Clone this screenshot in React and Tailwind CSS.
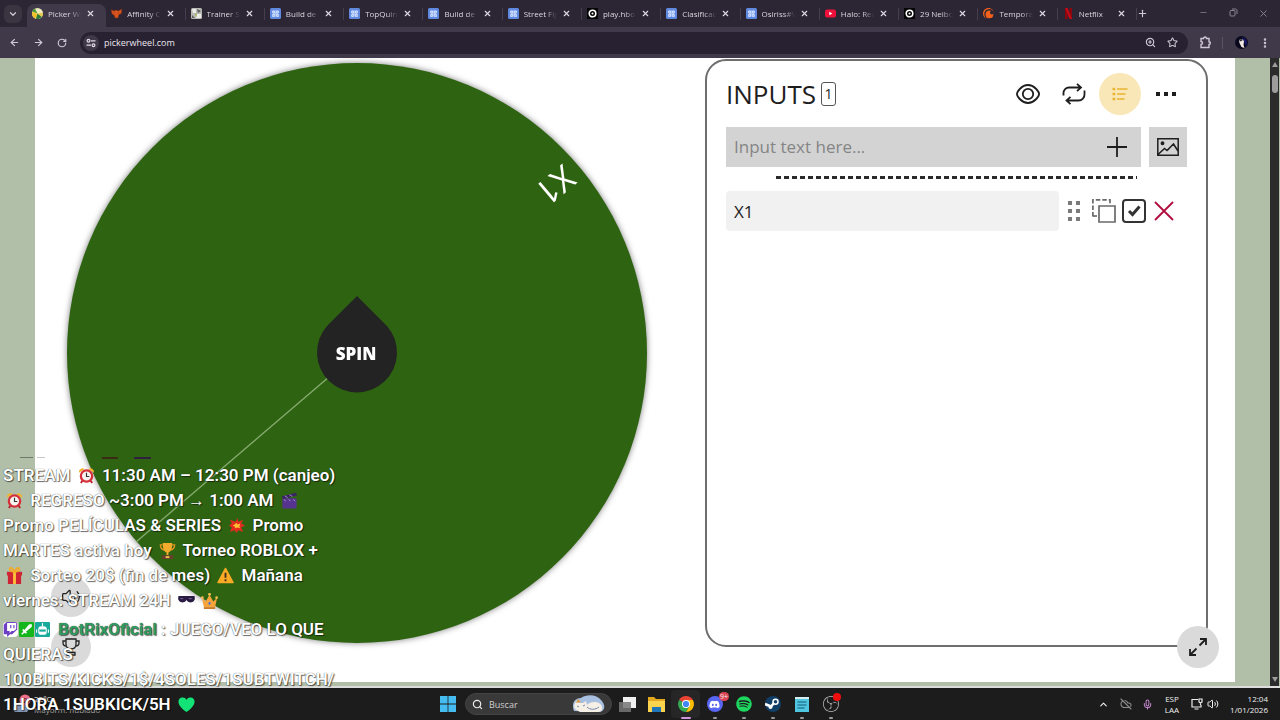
import React, { useState } from 'react';
import { ArrowLeft, ArrowRight, ChevronDown, ChevronUp, CloudOff, Mic, Minus, Plus, RotateCw, Search, Star, Volume2, X, ZoomIn, MoreVertical } from 'lucide-react';
import { FaDiscord, FaSpotify, FaSteamSymbol, FaTwitch } from 'react-icons/fa';
import { SiCrunchyroll, SiObsstudio } from 'react-icons/si';

const tabs = [
  { title: 'Picker Wh', icon: 'picker' },
  { title: 'Affinity Ch', icon: 'affinity' },
  { title: 'Trainer Se', icon: 'trainer' },
  { title: 'Build de', icon: 'blue' },
  { title: 'TopQuint', icon: 'blue' },
  { title: 'Build de', icon: 'blue' },
  { title: 'Street Fig', icon: 'blue' },
  { title: 'play.hbo', icon: 'hbo' },
  { title: 'Clasificac', icon: 'blue' },
  { title: 'Osiriss#W', icon: 'blue' },
  { title: 'Halo: Rea', icon: 'youtube' },
  { title: '29 Neibo', icon: 'hbo' },
  { title: 'Tempora', icon: 'crunchy' },
  { title: 'Netflix', icon: 'netflix' },
];

function Favicon({ name }) {
  if (name === 'crunchy') return <SiCrunchyroll size={11} color="#f4611c" className="shrink-0" />;
  return (
    <svg viewBox="0 0 11 11" className="size-[11px] shrink-0" aria-hidden="true">
      {name === 'picker' && (
        <>
          <circle cx="5.5" cy="5.5" r="5.5" fill="#efe9bd" />
          <path d="M5.500 5.500 3 .6A5.500 5.500 0 0 0 .3 3.700z" fill="#4e9c3c" />
          <path d="M5.500 5.500.3 3.700A5.500 5.500 0 0 0 4 10.800z" fill="#f0c32b" />
          <path d="M5.500 5.500 4 10.800a5.500 5.500 0 0 0 5.800-2z" fill="#2c7a32" />
          <path d="M5.500 5.500 9.800 8.800A5.500 5.500 0 0 0 11 5z" fill="#e7c94a" />
        </>
      )}
      {name === 'affinity' && (
        <path d="M0 1.500 3 3l2-1 2 1 4-2-.6 4.600L8 6.500 7 10H4.200L3 7 1 6zM3 4.300l1 1.200M8 4.300 7 5.500" fill="#d9541e" stroke="#7a2c12" strokeWidth=".5" />
      )}
      {name === 'trainer' && (
        <>
          <rect width="11" height="11" rx="1.500" fill="#b9b9b5" />
          <path d="M1 1h4v4H2zM6 6h4v4H5z" fill="#ecebe6" />
          <path d="M6 1l4 2-3 2zM1 7l3 3H1z" fill="#5c6260" />
          <path d="M4 5l2 1-1 3z" fill="#a8b84c" />
        </>
      )}
      {name === 'blue' && (
        <>
          <rect width="11" height="11" rx="1.500" fill="#6089e0" />
          <path d="M3 2.500h5v6H3z" fill="#9cb9f3" />
          <path d="M2.500 3h2v2h-2zM6.500 3h2v2h-2zM2.500 6.500h2v2h-2zM6.500 6.500h2v2h-2z" fill="none" stroke="#d9e5ff" strokeWidth=".8" />
        </>
      )}
      {name === 'hbo' && (
        <>
          <rect width="11" height="11" fill="#050505" />
          <circle cx="5.500" cy="5.500" r="3.300" fill="none" stroke="#fff" strokeWidth="1.600" />
          <circle cx="5.500" cy="5.500" r="1" fill="#fff" />
        </>
      )}
      {name === 'youtube' && (
        <>
          <rect y="1.500" width="11" height="8" rx="2" fill="#f0103c" />
          <path d="M4.300 3.800v3.400l3-1.700z" fill="#fff" />
        </>
      )}
      {name === 'netflix' && (
        <>
          <path d="M2 0h2.500v11H2zM6.500 0H9v11H6.500z" fill="#8a0710" />
          <path d="M2 0h2.500L9 11H6.500z" fill="#c50a18" />
        </>
      )}
    </svg>
  );
}

function Tab({ tab, active }) {
  return (
    <div className={"relative flex h-[23px] min-w-0 flex-1 items-center gap-[5px] px-[5px] pb-1 " + (active ? 'rounded-t-lg bg-[#40394a]' : '')}>
      <Favicon name={tab.icon} />
      <span className="min-w-0 flex-1 overflow-hidden text-[8px] font-medium whitespace-nowrap text-[#dcd6e0] [mask-image:linear-gradient(90deg,#000_65%,transparent)]">
        {tab.title}
      </span>
      <button type="button" aria-label={'Close ' + tab.title} className="mr-[6px] text-[#e0dbe4]">
        <X size={9} strokeWidth={3} />
      </button>
      {!active && <span className="absolute right-0 h-3 w-px bg-[#453e4e]" />}
    </div>
  );
}

function Browser() {
  return (
    <header className="bg-[#2c2634] text-[#cfc8d6]">
      <div className="flex h-[27px] items-end">
        <div className="flex h-[23px] w-[27px] items-center pb-1 pl-1">
          <button type="button" aria-label="Search tabs" className="flex size-[18px] items-center justify-center rounded-md bg-[#3a3540]">
            <ChevronDown size={10} strokeWidth={3} />
          </button>
        </div>
        <nav className="flex min-w-0 flex-1">
          {tabs.map((tab, i) => <Tab key={i} tab={tab} active={i === 0} />)}
        </nav>
        <div className="flex h-[27px] w-[143px] items-center pr-[2px]">
          <button type="button" aria-label="New tab"><Plus size={11} strokeWidth={2.500} /></button>
          <div className="ml-auto flex text-[#8a8490]">
            <button type="button" aria-label="Minimize" className="flex w-[30px] justify-center"><Minus size={9} /></button>
            <button type="button" aria-label="Restore" className="flex w-[30px] justify-center">
              <svg viewBox="0 0 9 9" className="size-[9px]" fill="none" stroke="currentColor"><rect x="1" y="2.500" width="5" height="5.500" rx="1" /><path d="M3 1h3.500A1.500 1.500 0 0 1 8 2.500V6" /></svg>
            </button>
            <button type="button" aria-label="Close window" className="flex w-[30px] justify-center"><X size={11} /></button>
          </div>
        </div>
      </div>
      <div className="flex h-[31px] items-center bg-[#40394a] pr-[9px]">
        <div className="flex w-[80px] items-center gap-[13px] pl-[9px]">
          <button type="button" aria-label="Back"><ArrowLeft size={11} strokeWidth={2.500} /></button>
          <button type="button" aria-label="Forward"><ArrowRight size={11} strokeWidth={2.500} /></button>
          <button type="button" aria-label="Reload"><RotateCw size={10} strokeWidth={2.800} /></button>
        </div>
        <div className="flex h-[22px] flex-1 items-center rounded-full bg-[#282131] pr-[10px] pl-[3px]">
          <button type="button" aria-label="Site information" className="flex size-4 items-center justify-center rounded-full bg-[#40394a]">
            <svg viewBox="0 0 10 10" className="size-[10px]" fill="none" stroke="#e2dce6" strokeWidth="1.200"><circle cx="2.500" cy="2.800" r="1.400" /><path d="M5 2.800h4.500M.5 7.200H5" /><circle cx="7.500" cy="7.200" r="1.400" /></svg>
          </button>
          <input aria-label="Address" defaultValue="pickerwheel.com" className="ml-[5px] min-w-0 flex-1 bg-transparent text-[9px] font-medium text-[#eae6ee] outline-none" />
          <div className="flex gap-[11px]">
            <button type="button" aria-label="Zoom"><ZoomIn size={11} strokeWidth={2.500} /></button>
            <button type="button" aria-label="Bookmark"><Star size={11} strokeWidth={2.200} /></button>
          </div>
        </div>
        <div className="flex items-center pl-[11px]">
          <button type="button" aria-label="Extensions">
            <svg viewBox="0 0 13 13" className="size-[13px]" fill="none" stroke="currentColor" strokeWidth="1.400"><path d="M2 2.500h2.500a1.500 1.500 0 0 1 3 0H10v3.200a1.400 1.400 0 0 1 0 2.800V11.500H2V8.500a1.500 1.500 0 0 0 0-3z" /></svg>
          </button>
          <span className="mr-3 ml-[10px] h-3 w-px bg-[#5b5466]" />
          <button type="button" aria-label="Profile">
            <svg viewBox="0 0 13 13" className="size-[13px]"><circle cx="6.500" cy="6.500" r="6.500" fill="#09081c" /><path d="M7 1a6 6 0 0 1 4 9z" fill="#1c1a70" /><path d="M4 4l3-1 2 2-.5 4 1 3-3-1-2-4z" fill="#f4e9e4" /><path d="M4 4l3-1 .5 1.500-2 1z" fill="#333" /></svg>
          </button>
          <button type="button" aria-label="Menu" className="ml-[11px]"><MoreVertical size={12} strokeWidth={3} /></button>
        </div>
      </div>
    </header>
  );
}

function Wheel() {
  return (
    <svg viewBox="0 0 580 580" className="block w-full overflow-visible drop-shadow-[0_0_3px_rgba(0,0,0,0.5)]">
      <circle cx="290" cy="290" r="290" fill="#2e6411" />
      <path d="M290 290 69 479" stroke="#87ab71" strokeWidth="1.300" />
      <text transform="translate(489 123) rotate(140)" textAnchor="middle" dominantBaseline="central" fontSize="34" fontWeight="500" fill="#fff" fontFamily="Open Sans, sans-serif">X1</text>
      <path d="M290 233 320 263A40 40 0 1 1 260 263Z" fill="#232323" />
      <text x="289" y="297" textAnchor="middle" fontSize="17" fontWeight="800" fill="#fff" fontFamily="Open Sans, sans-serif">SPIN</text>
    </svg>
  );
}

function InputsPanel() {
  const [text, setText] = useState('');
  const [entry, setEntry] = useState('X1');
  const [enabled, setEnabled] = useState(true);

  return (
    <section className="relative mt-px mb-[35px] w-[503px] shrink-0 rounded-[21px] border-2 border-[#6e6e6e] px-[19px] pt-3 text-[#1e1e1e]">
      <div className="flex h-[42px] items-center">
        <h1 className="text-[26px] leading-8 font-medium">INPUTS</h1>
        <span className="ml-[5px] flex h-6 w-[15px] items-center justify-center rounded-[3px] border border-[#555] text-sm">1</span>
        <div className="ml-auto flex gap-1">
          <button type="button" aria-label="Show" className="flex size-[42px] items-center justify-center">
            <svg viewBox="0 0 24 20" className="h-5 w-6" fill="none" stroke="currentColor" strokeWidth="1.800"><path d="M.9 10C.9 8 5.500 1 12 1s11.100 7 11.100 9S18.500 19 12 19 .9 12 .9 10Z" /><circle cx="12" cy="10" r="5.200" /></svg>
          </button>
          <button type="button" aria-label="Shuffle" className="flex size-[42px] items-center justify-center">
            <svg viewBox="0 0 24 22" className="h-[22px] w-6" fill="none" stroke="currentColor" strokeWidth="1.800"><path d="M1.500 12.500V10a5.500 5.500 0 0 1 5.500-5.500h11.500M15 .8l4 3.700L15 8.200M22.500 7.500V11a6 6 0 0 1-6 6.500H4.500M8.500 13.800l-4 3.700 4 3.700" /></svg>
          </button>
          <button type="button" aria-label="List" className="flex size-[42px] items-center justify-center rounded-full bg-[#fae7b7]">
            <svg viewBox="0 0 16 14" className="h-[14px] w-4" stroke="#e9b434" strokeWidth="1.600"><path d="M5 2h10.500M5 7h8.500M5 12h7.500" /><path d="M.5 2h2.800M.5 7h2.800M.5 12h2.800" strokeWidth="2.600" /></svg>
          </button>
          <button type="button" aria-label="More" className="flex size-[42px] items-center justify-center">
            <svg viewBox="0 0 20 4" className="h-1 w-5" fill="currentColor"><path d="M0 0h4v4H0zM8 0h4v4H8zM16 0h4v4h-4z" /></svg>
          </button>
        </div>
      </div>

      <div className="mt-3 flex h-10 gap-2">
        <div className="flex min-w-0 flex-1 items-center bg-[#d3d3d3] pr-[14px] pl-2">
          <input
            aria-label="Input text"
            value={text}
            onChange={e => setText(e.target.value)}
            placeholder="Input text here..."
            className="min-w-0 flex-1 bg-transparent text-[17px] font-medium outline-none placeholder:text-[#858585]"
          />
          <button type="button" aria-label="Add">
            <svg viewBox="0 0 20 20" className="size-5" stroke="currentColor" strokeWidth="1.800"><path d="M10 0v20M0 10h20" /></svg>
          </button>
        </div>
        <button type="button" aria-label="Add image" className="flex w-[38px] items-center justify-center bg-[#d3d3d3]">
          <svg viewBox="0 0 22 18" className="h-[18px] w-[22px]" fill="none" stroke="currentColor" strokeWidth="1.500"><path d="M.8.8h20.400v16.400H.8zM1 16.500l6.500-6 2.500 2 6.500-6.500 4.500 7M10 12.500l2-1.500" /><circle cx="5.500" cy="5.200" r="1.200" fill="currentColor" /></svg>
        </button>
      </div>

      <div className="mx-[50px] mt-[9px] h-[3px] bg-[repeating-linear-gradient(90deg,#2b2b2b_0_5px,transparent_5px_8px)]" />

      <div className="mt-3 flex h-10 items-center pr-[13px]">
        <input
          aria-label="Entry 1"
          value={entry}
          onChange={e => setEntry(e.target.value)}
          className="h-10 min-w-0 flex-1 rounded-sm bg-[#f1f1f1] px-2 text-[17px] font-medium outline-none"
        />
        <button type="button" aria-label="Move" className="ml-[9px] text-[#7a7a7a]">
          <svg viewBox="0 0 12 20" className="h-5 w-3" fill="currentColor"><path d="M0 0h4v4H0zM8 0h4v4H8zM0 8h4v4H0zM8 8h4v4H8zM0 16h4v4H0zM8 16h4v4H8z" /></svg>
        </button>
        <button type="button" aria-label="Duplicate" className="ml-3 text-[#6a6a6a]">
          <svg viewBox="0 0 24 24" className="size-6" fill="none" stroke="currentColor" strokeWidth="1.700"><path d="M7 7h16v16H7z" /><path d="M.9 17.500V.9H18V4.500" strokeDasharray="4.500 2" /><path d="M.9 17H5" /></svg>
        </button>
        <label className="relative ml-[6px] block size-6">
          <input
            type="checkbox"
            aria-label="Enabled"
            checked={enabled}
            onChange={e => setEnabled(e.target.checked)}
            className="block size-6 appearance-none rounded border-2 border-[#333]"
          />
          {enabled && (
            <svg viewBox="0 0 24 24" className="pointer-events-none absolute inset-0 size-6" fill="none" stroke="#333" strokeWidth="3"><path d="M7 12l3.500 3.500L17.500 7.500" /></svg>
          )}
        </label>
        <button type="button" aria-label="Delete" className="ml-2 text-[#b00d3c]">
          <svg viewBox="0 0 20 20" className="size-5" stroke="currentColor" strokeWidth="1.800"><path d="M1 1l18 18M19 1 1 19" /></svg>
        </button>
      </div>

      <button type="button" aria-label="Full screen" className="absolute -right-[13px] -bottom-[23px] flex size-[42px] items-center justify-center rounded-full bg-[#dadada]">
        <svg viewBox="0 0 18 18" className="size-[18px]" fill="none" stroke="currentColor" strokeWidth="1.800"><path d="M10.500 7.500 17 1M11 1h6v6M7.500 10.500 1 17M1 11v6h6" /></svg>
      </button>
    </section>
  );
}

function Emoji({ name }) {
  return (
    <svg viewBox="0 0 18 18" className="mx-[3px] inline-block size-[17px] align-[-3px]" aria-hidden="true">
      {name === 'clock' && (
        <>
          <path d="M1 6a4 4 0 0 1 6-4zM17 6a4 4 0 0 0-6-4z" fill="#f5b229" />
          <path d="M3 17l2-3M15 17l-2-3" stroke="#b7222b" strokeWidth="2" />
          <circle cx="9" cy="9.500" r="6" fill="#f7f3f0" stroke="#d5303a" strokeWidth="2.400" />
          <path d="M9 6v4h3" fill="none" stroke="#333" strokeWidth="1.200" />
        </>
      )}
      {name === 'clapper' && (
        <>
          <rect x="1.500" y="6.500" width="15" height="11" rx="1" fill="#56338f" />
          <path d="M1 4.500 16 .8l.8 3L1.800 7.500z" fill="#3b2466" />
          <path d="M4 4l3 2M9 2.800l3 2M3 8l2 1.500M8 8l2 1.500M13 8l2 1.500" stroke="#a893d0" />
        </>
      )}
      {name === 'boom' && (
        <>
          <path d="M8 5 10 1l1 4 5-2-2 4 4 2-4 2 2 5-5-2-2 3-2-3-5 2 2-5-3-2 3-2-2-4z" fill="#e22c20" />
          <path d="M9 6l1 2 3-1-1 3 1 2-3-1-2 1-1-2-2-1 2-1z" fill="#ffc034" />
        </>
      )}
      {name === 'trophy' && (
        <>
          <path d="M4 3H1.500c0 4 1.500 5 4 5.500M14 3h2.500c0 4-1.500 5-4 5.500" fill="none" stroke="#e89421" strokeWidth="1.500" />
          <path d="M4 1h10c0 6-1 9-4 10v3H8v-3C5 10 4 7 4 1z" fill="#f4aa2b" />
          <path d="M3 14h12v4H3z" fill="#6b3e2a" /><path d="M7 15h4v2H7z" fill="#f0c050" />
        </>
      )}
      {name === 'gift' && (
        <>
          <path d="M1 5h16v4H1zM2 9h14v9H2z" fill="#ce2434" />
          <path d="M7.500 5h3v13h-3z" fill="#ffc13b" />
          <path d="M9 5C3 5 3 1 5 1s4 4 4 4 2-4 4-4 2 4-4 4" fill="none" stroke="#f3a826" strokeWidth="1.800" />
        </>
      )}
      {name === 'warning' && (
        <>
          <path d="M9 1.500 17 16.500H1z" fill="#fbaa26" stroke="#fbaa26" strokeWidth="1.500" strokeLinejoin="round" />
          <path d="M9 6v5.500M9 13v2" stroke="#42301d" strokeWidth="2" />
        </>
      )}
      {name === 'glasses' && (
        <>
          <path d="M1 5h16v3a4 3.500 0 0 1-7.500 0h-1A4 3.500 0 0 1 1 8z" fill="#2a1b43" stroke="#2a1b43" strokeWidth="1.500" strokeLinejoin="round" />
          <path d="M2.500 7h3M11.500 7h3" stroke="#7c6b9b" />
        </>
      )}
      {name === 'crown' && (
        <>
          <path d="M1 6l4 4 4-7 4 7 4-4-2 10H3z" fill="#f4a43b" />
          <path d="M3 16h12v2H3z" fill="#c97a25" />
          <circle cx="9" cy="2.500" r="1.500" fill="#fbc04b" /><circle cx="1.500" cy="6" r="1.400" fill="#fbc04b" /><circle cx="16.500" cy="6" r="1.400" fill="#fbc04b" />
          <path d="M9 10l1.500 2L9 14l-1.500-2z" fill="#5677cb" />
        </>
      )}
      {name === 'heart' && (
        <path d="M9 17C1 11 .5 8 .5 6A4.500 4.500 0 0 1 9 4a4.500 4.500 0 0 1 8.500 2c0 2-.5 5-8.500 11z" fill="#13e276" />
      )}
    </svg>
  );
}

function Chat() {
  return (
    <aside className="pointer-events-none absolute bottom-[3px] left-[3px] font-['Roboto','Liberation_Sans',sans-serif] text-[17px] leading-[25px] font-semibold whitespace-nowrap text-white [text-shadow:0_0_1px_rgba(0,0,0,0.8),1px_1px_1px_rgba(0,0,0,0.55)]">
      <div className="mb-1 flex h-[2px] pl-[17px]">
        <span className="h-px w-[13px] bg-[#6f7a6a]" />
        <span className="ml-1 h-px w-2 bg-[#c8c8c8]" />
        <span className="ml-[57px] h-[2px] w-4 bg-[#3b2b14]" />
        <span className="ml-4 h-[2px] w-[17px] bg-[#30223e]" />
      </div>
      <p>
        STREAM <Emoji name="clock" /> 11:30 AM – 12:30 PM (canjeo)<br />
        <Emoji name="clock" /> REGRESO ~3:00 PM → 1:00 AM <Emoji name="clapper" /><br />
        Promo PELÍCULAS &amp; SERIES <Emoji name="boom" /> Promo<br />
        MARTES activa hoy <Emoji name="trophy" /> Torneo ROBLOX +<br />
        <Emoji name="gift" /> Sorteo 20$ (fin de mes) <Emoji name="warning" /> Mañana<br />
        viernes: STREAM 24H <Emoji name="glasses" /><Emoji name="crown" />
      </p>
      <p className="mt-1">
        <span className="mr-1 inline-flex gap-px align-[-2px]">
          <FaTwitch size={15} color="#6d3fc4" className="rounded-sm bg-white" />
          <svg viewBox="0 0 14 14" className="size-[15px]"><rect width="14" height="14" rx="1" fill="#15b51c" /><path d="M12 2v2.500L6.500 9l1 1-1 1-1.500-1-2 2-1-1 2-2-1-1.500 1-1 1 1L9.500 2z" fill="#fff" /></svg>
          <svg viewBox="0 0 14 14" className="size-[15px]"><rect width="14" height="14" rx="1" fill="#1aaa9c" /><path d="M7 1v3M1.500 7v3M12.500 7v3" stroke="#fff" /><rect x="3" y="4" width="8" height="8" rx="3" fill="#fff" /><path d="M4 7h6v2H4z" fill="#1aaa9c" /></svg>
        </span>{' '}
        <span className="text-[#2f9d62]">BotRixOficial</span> : JUEGO/VEO LO QUE<br />
        QUIERAS<br />
        100BITS/KICKS/1$/4SOLES/1SUBTWITCH/<br />
        1HORA 1SUBKICK/5H <Emoji name="heart" />
      </p>
    </aside>
  );
}

function TaskIcon({ label, children }) {
  return (
    <button type="button" aria-label={label} className="relative flex h-7 w-[29px] items-center justify-center">
      {children}
      <span className="absolute bottom-[-1px] h-[2px] w-1 rounded bg-[#9a9a9a]" />
    </button>
  );
}

function Taskbar() {
  return (
    <footer className="grid h-8 grid-cols-[1fr_auto_1fr] items-center bg-[#1c1c1c] text-[8px] leading-[11px] text-[#efefef]">
      <div className="flex items-center pl-3">
        <svg viewBox="0 0 20 20" className="size-5">
          <path d="M3 18a4 4 0 0 1 1-7 5 5 0 0 1 9 0 4 4 0 0 1 2 7z" fill="#8396b5" />
          <circle cx="13" cy="6" r="5.500" fill="#ef7088" />
          <text x="13" y="9" textAnchor="middle" fontSize="8" fill="#3b1520">2</text>
        </svg>
        <div className="ml-[2px]">
          <div>22°C</div>
          <div className="text-[#a5a5a5]">Mayorm. nublado</div>
        </div>
      </div>

      <div className="flex h-8 items-center">
        <button type="button" aria-label="Start" className="flex w-[26px] justify-center">
          <svg viewBox="0 0 16 16" className="size-4"><path d="M0 0h7.600v7.600H0zM8.400 0H16v7.600H8.400zM0 8.400h7.600V16H0zM8.400 8.400H16V16H8.400z" fill="#45bdf0" /></svg>
        </button>
        <label className="mr-px ml-1 flex h-[22px] w-[147px] items-center rounded-full border border-[#444] bg-[#393939] px-[6px]">
          <Search size={11} strokeWidth={2.500} />
          <input aria-label="Buscar" placeholder="Buscar" className="ml-[6px] min-w-0 flex-1 bg-transparent text-[9px] outline-none placeholder:text-[#cfcfcf]" />
          <svg viewBox="0 0 33 18" className="h-[18px] w-[33px]"><path d="M2 16C-1 8 3 3 9 3c5-4 16-4 20 2 5 5 4 11-1 12z" fill="#a8bfdf" /><path d="M3 14c-2-3 0-7 2-8l2 2h4l3-2 1 4c5-5 14-3 15 2 1 4-2 5-5 5H8z" fill="#f6efe5" /><path d="M4 8l2-4 3 3" fill="#dd9b50" /><path d="M5 11l2 1M11 11l2-1M15 12c3 3 8 3 12 0" stroke="#7186ab" fill="none" /></svg>
        </label>
        <button type="button" aria-label="Task view" className="flex w-[29px] justify-center">
          <svg viewBox="0 0 17 15" className="h-[15px] w-[17px]"><path d="M4 0h13v11H4z" fill="#f0f0f0" /><path d="M0 5h12v10H0z" fill="#777" opacity=".85" /></svg>
        </button>
        <button type="button" aria-label="Explorer" className="flex w-[29px] justify-center">
          <svg viewBox="0 0 17 15" className="h-[15px] w-[17px]"><path d="M0 0h6l2 2h9v13H0z" fill="#e3a81f" /><path d="M0 4h17v11H0z" fill="#fcd34d" /><path d="M4 10h9v5H4z" fill="#1f75b8" /></svg>
        </button>
        <button type="button" aria-label="Chrome" className="relative flex h-7 w-[29px] items-center justify-center rounded bg-[#262626]">
          <svg viewBox="0 0 16 16" className="size-4"><path d="M8 8 1.100 4a8 8 0 0 1 13.800 0z" fill="#e94335" /><path d="M1.100 4a8 8 0 0 0 6.900 12l3.500-6L8 8z" fill="#35a852" /><path d="M8 4h6.900A8 8 0 0 1 8 16l3.500-6z" fill="#fbbc05" /><circle cx="8" cy="8" r="4" fill="#fff" /><circle cx="8" cy="8" r="3.100" fill="#4285f4" /></svg>
          <span className="absolute bottom-[-1px] h-[2px] w-[10px] rounded bg-[#d294dc]" />
        </button>
        <TaskIcon label="Discord">
          <span className="flex size-4 items-center justify-center rounded-full bg-[#5865f2]"><FaDiscord size={11} color="#fff" /></span>
          <span className="absolute top-[2px] right-0 flex h-[9px] w-[10px] items-center justify-center rounded-full bg-[#dc4453] text-[7px]">9+</span>
        </TaskIcon>
        <TaskIcon label="Spotify"><FaSpotify size={16} color="#1ed760" /></TaskIcon>
        <TaskIcon label="Steam">
          <svg viewBox="0 0 16 16" className="size-4"><circle cx="8" cy="8" r="8" fill="#103e66" /><path d="M0 8l6 2.500L9 7" fill="none" stroke="#fff" strokeWidth="2.600" /><circle cx="10.500" cy="5.800" r="2.500" fill="#103e66" stroke="#fff" strokeWidth="1.500" /><circle cx="5.500" cy="11" r="2" fill="#fff" /></svg>
        </TaskIcon>
        <TaskIcon label="Notepad">
          <svg viewBox="0 0 14 16" className="h-4 w-[14px]"><path d="M0 2h14v14H0z" fill="#4fc5df" /><path d="M0 1h14v2H0z" fill="#d6edf0" /><path d="M2.500 6h9M2.500 9h9M2.500 12h7" stroke="#155c78" strokeWidth="1.200" /></svg>
        </TaskIcon>
        <TaskIcon label="OBS Studio">
          <SiObsstudio size={16} color="#bfbfbf" />
          <span className="absolute top-[3px] right-1 size-2 rounded-full bg-[#f00d0d]" />
        </TaskIcon>
      </div>

      <div className="flex items-center justify-end pr-3 text-right">
        <ChevronUp size={11} strokeWidth={2.500} />
        <CloudOff size={12} strokeWidth={2.200} className="ml-[11px] text-[#8d8d8d]" />
        <Mic size={11} strokeWidth={2.200} className="ml-[10px] text-[#c58ad0]" />
        <div className="mr-3 ml-3 text-center"><div>ESP</div><div>LAA</div></div>
        <svg viewBox="0 0 12 12" className="size-3" fill="none" stroke="currentColor" strokeWidth="1.200"><path d="M7 1.500H1v7.500h9V7M3.500 11h4M8 1h3v3l-1.500 1L8 4zM9.500 5v2" /></svg>
        <Volume2 size={12} strokeWidth={2} className="ml-1" />
        <div className="ml-[11px]"><div>12:04</div><div>1/01/2026</div></div>
      </div>
    </footer>
  );
}

export default function App() {
  return (
    <div className="relative flex h-screen flex-col overflow-hidden bg-[#1c1c1c] font-['Open_Sans','Noto_Sans',sans-serif]">
      <Browser />
      <div className="flex min-h-0 flex-1 border-b-2 border-[#dcdcdc] bg-[#b2bfa8]">
        <main className="relative mx-[35px] mb-1 flex min-w-0 flex-1 bg-white pr-[27px]">
          <div className="min-w-0 flex-1 pt-[5px] pr-[58px] pl-8"><Wheel /></div>
          <InputsPanel />
          <div className="absolute bottom-[15px] left-4 flex flex-col gap-[10px] text-[#222]">
            <button type="button" aria-label="Sound" className="flex size-10 items-center justify-center rounded-full bg-[#dadada]">
              <Volume2 size={20} strokeWidth={1.500} />
            </button>
            <button type="button" aria-label="Results" className="flex size-10 items-center justify-center rounded-full bg-[#dadada]">
              <svg viewBox="0 0 18 18" className="size-[18px]" fill="none" stroke="currentColor" strokeWidth="1.300"><path d="M4 1h10v5c0 3-2 5-5 5S4 9 4 6zM4 3H1v2c0 2 1.500 3 3.500 3M14 3h3v2c0 2-1.500 3-3.500 3M9 11v3M5 17v-2.500h8V17z" /></svg>
            </button>
          </div>
        </main>
        <div className="mr-px flex w-[9px] flex-col items-center justify-between bg-[#2b2b2b] py-1">
          <div className="flex flex-col items-center gap-2">
            <svg viewBox="0 0 6 5" className="h-[5px] w-[6px]" fill="#9c9c9c"><path d="M3 0l3 5H0z" /></svg>
            <span className="h-[18px] w-[6px] rounded-full bg-[#9c9c9c]" />
          </div>
          <svg viewBox="0 0 6 5" className="h-[5px] w-[6px]" fill="#9c9c9c"><path d="M3 5l3-5H0z" /></svg>
        </div>
      </div>
      <Taskbar />
      <Chat />
    </div>
  );
}
